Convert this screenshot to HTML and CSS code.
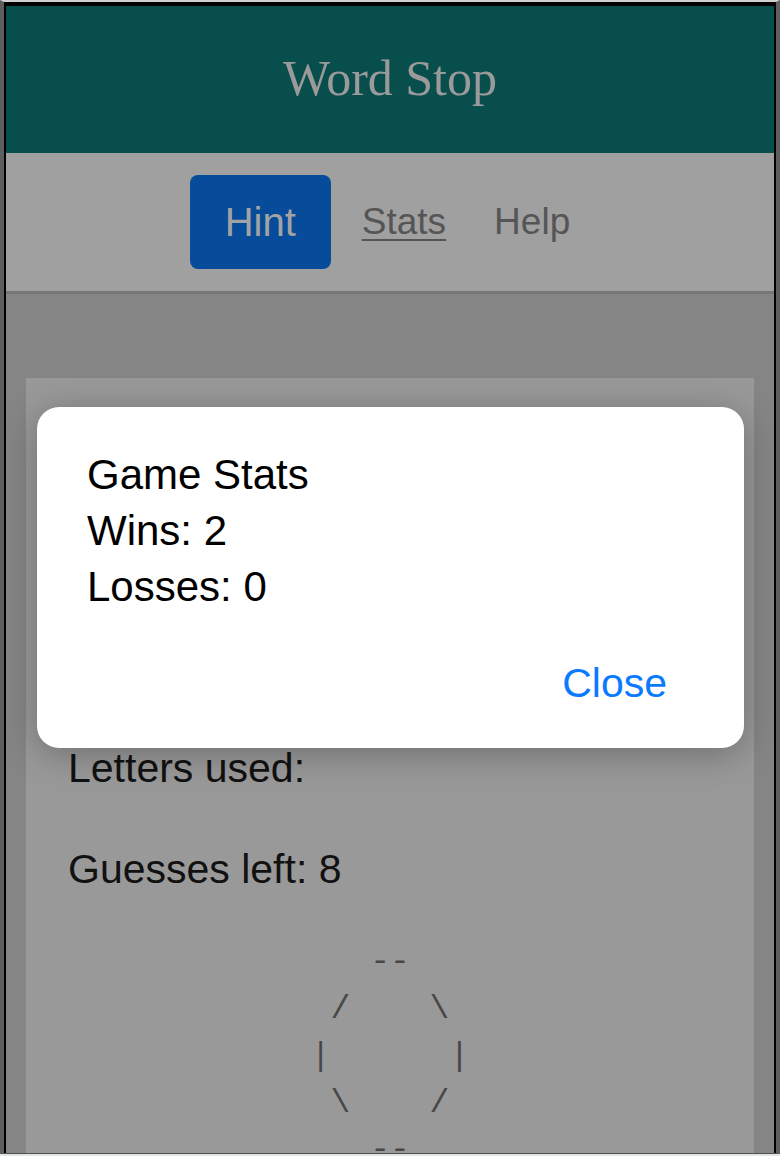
FILE: index.html
```html
<!DOCTYPE html>
<html lang="en">
<head>
<meta charset="utf-8">
<title>Word Stop</title>
<link rel="stylesheet" href="styles.css">
</head>
<body>
<div class="device">
  <div class="screen">
    <header class="header"><h1 class="title">Word Stop</h1></header>
    <nav class="nav">
      <button class="hint-btn">Hint</button>
      <a class="nav-link stats" href="#">Stats</a>
      <a class="nav-link help" href="#">Help</a>
    </nav>
    <main class="main">
      <section class="card">
        <p class="line letters">Letters used:</p>
        <p class="line guesses">Guesses left: 8</p>
        <div class="ascii">
          <div class="art-row">--</div>
          <div class="art-row">/    \</div>
          <div class="art-row">|      |</div>
          <div class="art-row">\    /</div>
          <div class="art-row">--</div>
        </div>
      </section>
    </main>
    <div class="modal" role="dialog">
      <div class="modal-body">
        <div class="modal-line">Game Stats</div>
        <div class="modal-line">Wins: 2</div>
        <div class="modal-line">Losses: 0</div>
      </div>
      <div class="modal-actions"><button class="close-btn">Close</button></div>
    </div>
  </div>
</div>
</body>
</html>
```
FILE: styles.css
```css
html, body {
  margin: 0;
  padding: 0;
}
body {
  background: #dfe5e5;
  width: 780px;
  height: 1156px;
  overflow: hidden;
  font-family: "Liberation Sans", Arial, sans-serif;
}
.device {
  box-sizing: border-box;
  height: 1154px;
  border-top: 2px solid #cfcfcf;
  border-left: 4px solid #5e5e5e;
  border-right: 4px solid #5e5e5e;
  border-bottom: 1px solid #505050;
}
.screen {
  position: relative;
  box-sizing: border-box;
  height: 100%;
  border-top: 4px solid #000;
  border-left: 2px solid #000;
  border-right: 2px solid #000;
  background: #858585;
  overflow: hidden;
  display: flex;
  flex-direction: column;
}
.header {
  height: 147px;
  background: #074e4c;
  display: flex;
  align-items: center;
  justify-content: center;
  flex-shrink: 0;
}
.title {
  margin: 0 0 4px;
  font-family: "Liberation Serif", "Times New Roman", serif;
  font-weight: normal;
  font-size: 50px;
  line-height: 1;
  color: #9a9a9a;
}
.nav {
  height: 141px;
  box-sizing: border-box;
  background: #a0a0a0;
  border-bottom: 3px solid #777;
  display: flex;
  align-items: center;
  justify-content: center;
  flex-shrink: 0;
}
.hint-btn {
  width: 141px;
  height: 94px;
  border: none;
  border-radius: 8px;
  background: #074c9a;
  color: #a3a3a3;
  font-family: "Liberation Sans", Arial, sans-serif;
  font-size: 40px;
  margin-right: 31px;
  padding: 0;
}
.nav-link {
  font-size: 37px;
  color: #555;
  text-decoration: none;
}
.stats {
  text-decoration: underline;
  text-underline-offset: 5px;
  text-decoration-thickness: 2px;
  margin-right: 48px;
}
.help {
  margin-right: 20px;
}
.main {
  flex: 1;
  padding: 84px 20px 0;
  display: flex;
  flex-direction: column;
}
.card {
  flex: 1;
  background: #999;
  padding: 365px 42px 0;
}
.line {
  margin: 0;
  font-size: 41px;
  line-height: 50px;
  color: #111;
}
.guesses {
  margin-top: 51px;
}
.ascii {
  margin-top: 45px;
  font-family: "Liberation Mono", "Courier New", monospace;
  font-size: 33px;
  line-height: 47px;
  color: #474747;
  text-align: center;
  margin-left: -42px;
  margin-right: -42px;
}
.art-row {
  white-space: pre;
}
.modal {
  position: absolute;
  left: 31px;
  top: 401px;
  width: 707px;
  height: 341px;
  box-sizing: border-box;
  background: #fff;
  border-radius: 22px;
  box-shadow: 0 6px 36px rgba(0, 0, 0, 0.28);
  padding: 40px 0 0 50px;
  display: flex;
  flex-direction: column;
}
.modal-line {
  font-size: 42px;
  line-height: 56px;
  color: #000;
}
.modal-actions {
  margin-top: 40px;
  display: flex;
  justify-content: flex-end;
  padding-right: 77px;
}
.close-btn {
  border: none;
  background: none;
  padding: 0;
  font-family: "Liberation Sans", Arial, sans-serif;
  font-size: 41px;
  line-height: 56px;
  color: #0a7aff;
}
```
